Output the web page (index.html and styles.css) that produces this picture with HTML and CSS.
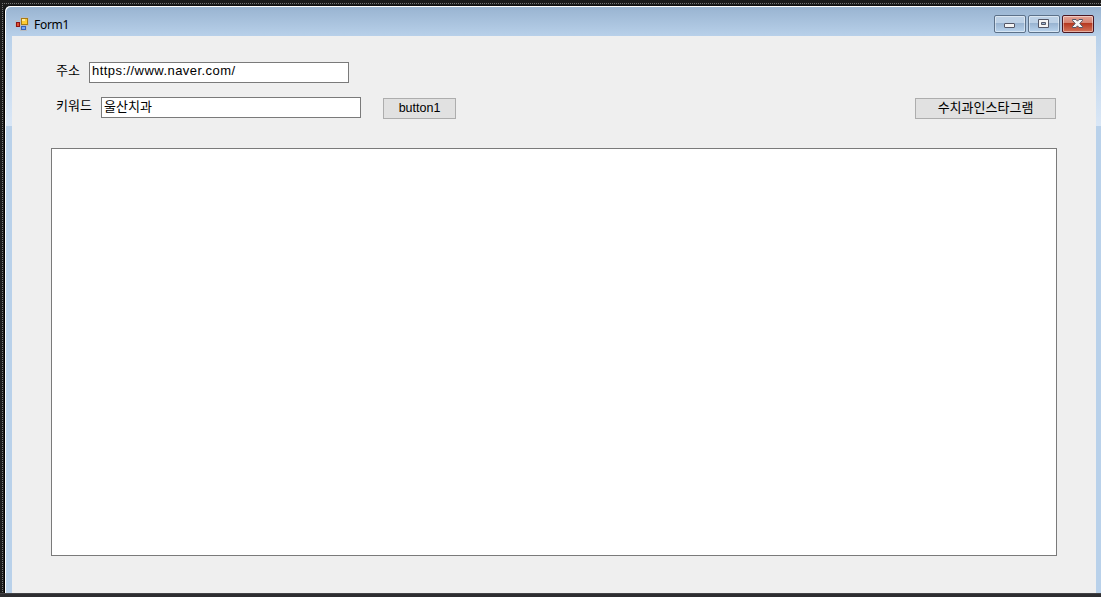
FILE: index.html
```
<!DOCTYPE html>
<html lang="ko">
<head>
    <meta charset="UTF-8">
    <title>Form1</title>
    <link rel="stylesheet" href="styles.css">
</head>
<body>
    <div class="window">
        <div class="title-bar">
            <svg class="form-icon" width="15" height="14" viewBox="0 0 15 14" shape-rendering="crispEdges">
                <path d="M0.5 3.5h5v6h-5zM5.500 0.500h8v8h-8zM5.500 8.500h6v5h-6z" fill="none" stroke="#b9bcc2"/>
                <rect x="1" y="5" width="4" height="5" fill="#8e1515"/>
                <rect x="2" y="6" width="2" height="3" fill="#e05030"/>
                <rect x="6" y="1" width="7" height="7" fill="#a87b10"/>
                <rect x="7" y="2" width="5" height="5" fill="#fccb35"/>
                <rect x="7" y="2" width="3" height="2" fill="#ffeb9c"/>
                <rect x="6" y="9" width="5" height="4" fill="#3562b8"/>
                <rect x="7" y="10" width="3" height="2" fill="#75a5f5"/>
            </svg>
            <span class="title">Form1</span>
            <div class="controls">
                <div class="control">
                    <svg width="12" height="10" viewBox="0 0 12 10">
                        <rect x="0.500" y="4.500" width="10" height="4" rx="0.500" fill="#f4f4f4" stroke="#535666"/>
                    </svg>
                </div>
                <div class="control">
                    <svg width="12" height="10" viewBox="0 0 12 10">
                        <path d="M0.500 0.500h10v8h-10zM3.500 3.500v2h4v-2z" fill="#f4f4f4" fill-rule="evenodd" stroke="#535666"/>
                    </svg>
                </div>
                <div class="control close">
                    <svg width="12" height="10" viewBox="0 0 12 10">
                        <path d="M0.500 0.500h3.500l1.500 1.700l1.500-1.700h3.500v1l-2.700 3l2.700 3v1h-3.500l-1.500-1.700l-1.500 1.700h-3.500v-1l2.700-3l-2.700-3z" fill="#f6f6f6" stroke="#535666"/>
                    </svg>
                </div>
            </div>
        </div>
        <div class="client">
            <div class="row">
                <label class="label" for="address">주소</label>
                <input class="textbox address" id="address" type="text" value="https://www.naver.com/" spellcheck="false">
            </div>
            <div class="row keyword-row">
                <label class="label" for="keyword">키워드</label>
                <input class="textbox keyword" id="keyword" type="text" value="울산치과" spellcheck="false">
                <button class="button">button1</button>
                <button class="button instagram">수치과인스타그램</button>
            </div>
            <div class="output"></div>
        </div>
    </div>
    <div class="bottom-bar"></div>
</body>
</html>
```
FILE: styles.css
```
* {
    box-sizing: border-box;
}
body {
    margin: 0;
    height: 597px;
    overflow: hidden;
    padding: 5px 0 0 4px;
    background-color: #1c1c1c;
    background-image:
        repeating-linear-gradient(to right, #777 0 1px, transparent 1px 2px),
        repeating-linear-gradient(to bottom, #777 0 1px, transparent 1px 2px);
    background-size: 100% 1px, 1px 100%;
    background-position: 2px 3px, 2px 3px;
    background-repeat: no-repeat;
    font-family: "Noto Sans CJK KR", sans-serif;
    font-size: 13px;
    color: #000;
}
.window {
    width: 1098px;
    height: 588px;
    padding-right: 6px;
    padding-left: 7px;
    border-top: 1px solid #111;
    border-left: 1px solid #000;
    border-radius: 6px 0 0 0;
    box-shadow: inset 1px 1px 0 #fff;
    background:
        linear-gradient(#99b4d1, #b9d1ea) 1px 1px / 100% 30px no-repeat,
        linear-gradient(#b9d1ea, #dae7f6) 1px 31px / 100% 89px no-repeat,
        #b9d1ea;
}
.title-bar {
    display: flex;
    height: 30px;
    padding-left: 3px;
}
.form-icon {
    margin-top: 11px;
}
.title {
    margin: 11px 0 0 4px;
    font-family: "Noto Sans", sans-serif;
    font-size: 12px;
    letter-spacing: -0.3px;
    line-height: 16px;
}
.controls {
    display: flex;
    gap: 2px;
    margin: 9px 2px 0 auto;
}
.control {
    display: flex;
    align-items: center;
    justify-content: center;
    width: 32px;
    height: 18px;
    border: 1px solid #5c7189;
    border-radius: 2px;
    box-shadow: inset 0 0 0 1px rgba(255, 255, 255, 0.45);
    background: linear-gradient(#bdd1e6 0 45%, #98b3d0 45%, #b9d3ed);
}
.close {
    border-color: #4b1722;
    background: linear-gradient(#e5a294 0, #d3806f 45%, #b5371f 45%, #d4745b);
}
.client {
    height: 557px;
    padding: 26px 39px 0;
    background-color: #efefef;
}
.row {
    display: flex;
    height: 21px;
    padding-left: 5px;
}
.label {
    width: 33px;
    height: 18px;
    line-height: 16px;
}
.textbox {
    width: 260px;
    height: 21px;
    padding: 0 2px 4px;
    border: 1px solid #7a7a7a;
    border-radius: 0;
    outline: none;
    background-color: #fff;
    font-family: "Noto Sans CJK KR", sans-serif;
    font-size: 13px;
    line-height: 15px;
}
.address {
    font-family: "Liberation Sans", sans-serif;
    letter-spacing: 0.45px;
}
.keyword-row {
    margin-top: 14px;
}
.keyword-row .label {
    width: 45px;
}
.button {
    width: 73px;
    height: 21px;
    margin: 1px 0 0 22px;
    padding: 0 0 2px;
    border: 1px solid #adadad;
    background-color: #e1e1e1;
    color: #000;
    font-family: "Liberation Sans", "Noto Sans CJK KR", sans-serif;
    font-size: 12.5px;
    line-height: 16px;
}
.instagram {
    width: 141px;
    margin: 1px 1px 0 auto;
    font-size: 13px;
}
.output {
    height: 408px;
    margin-top: 30px;
    border: 1px solid #7a7a7a;
    background-color: #fff;
}
.bottom-bar {
    height: 4px;
    margin-left: -4px;
    border-top: 1px solid #434346;
    background-color: #2d2d30;
}
```
